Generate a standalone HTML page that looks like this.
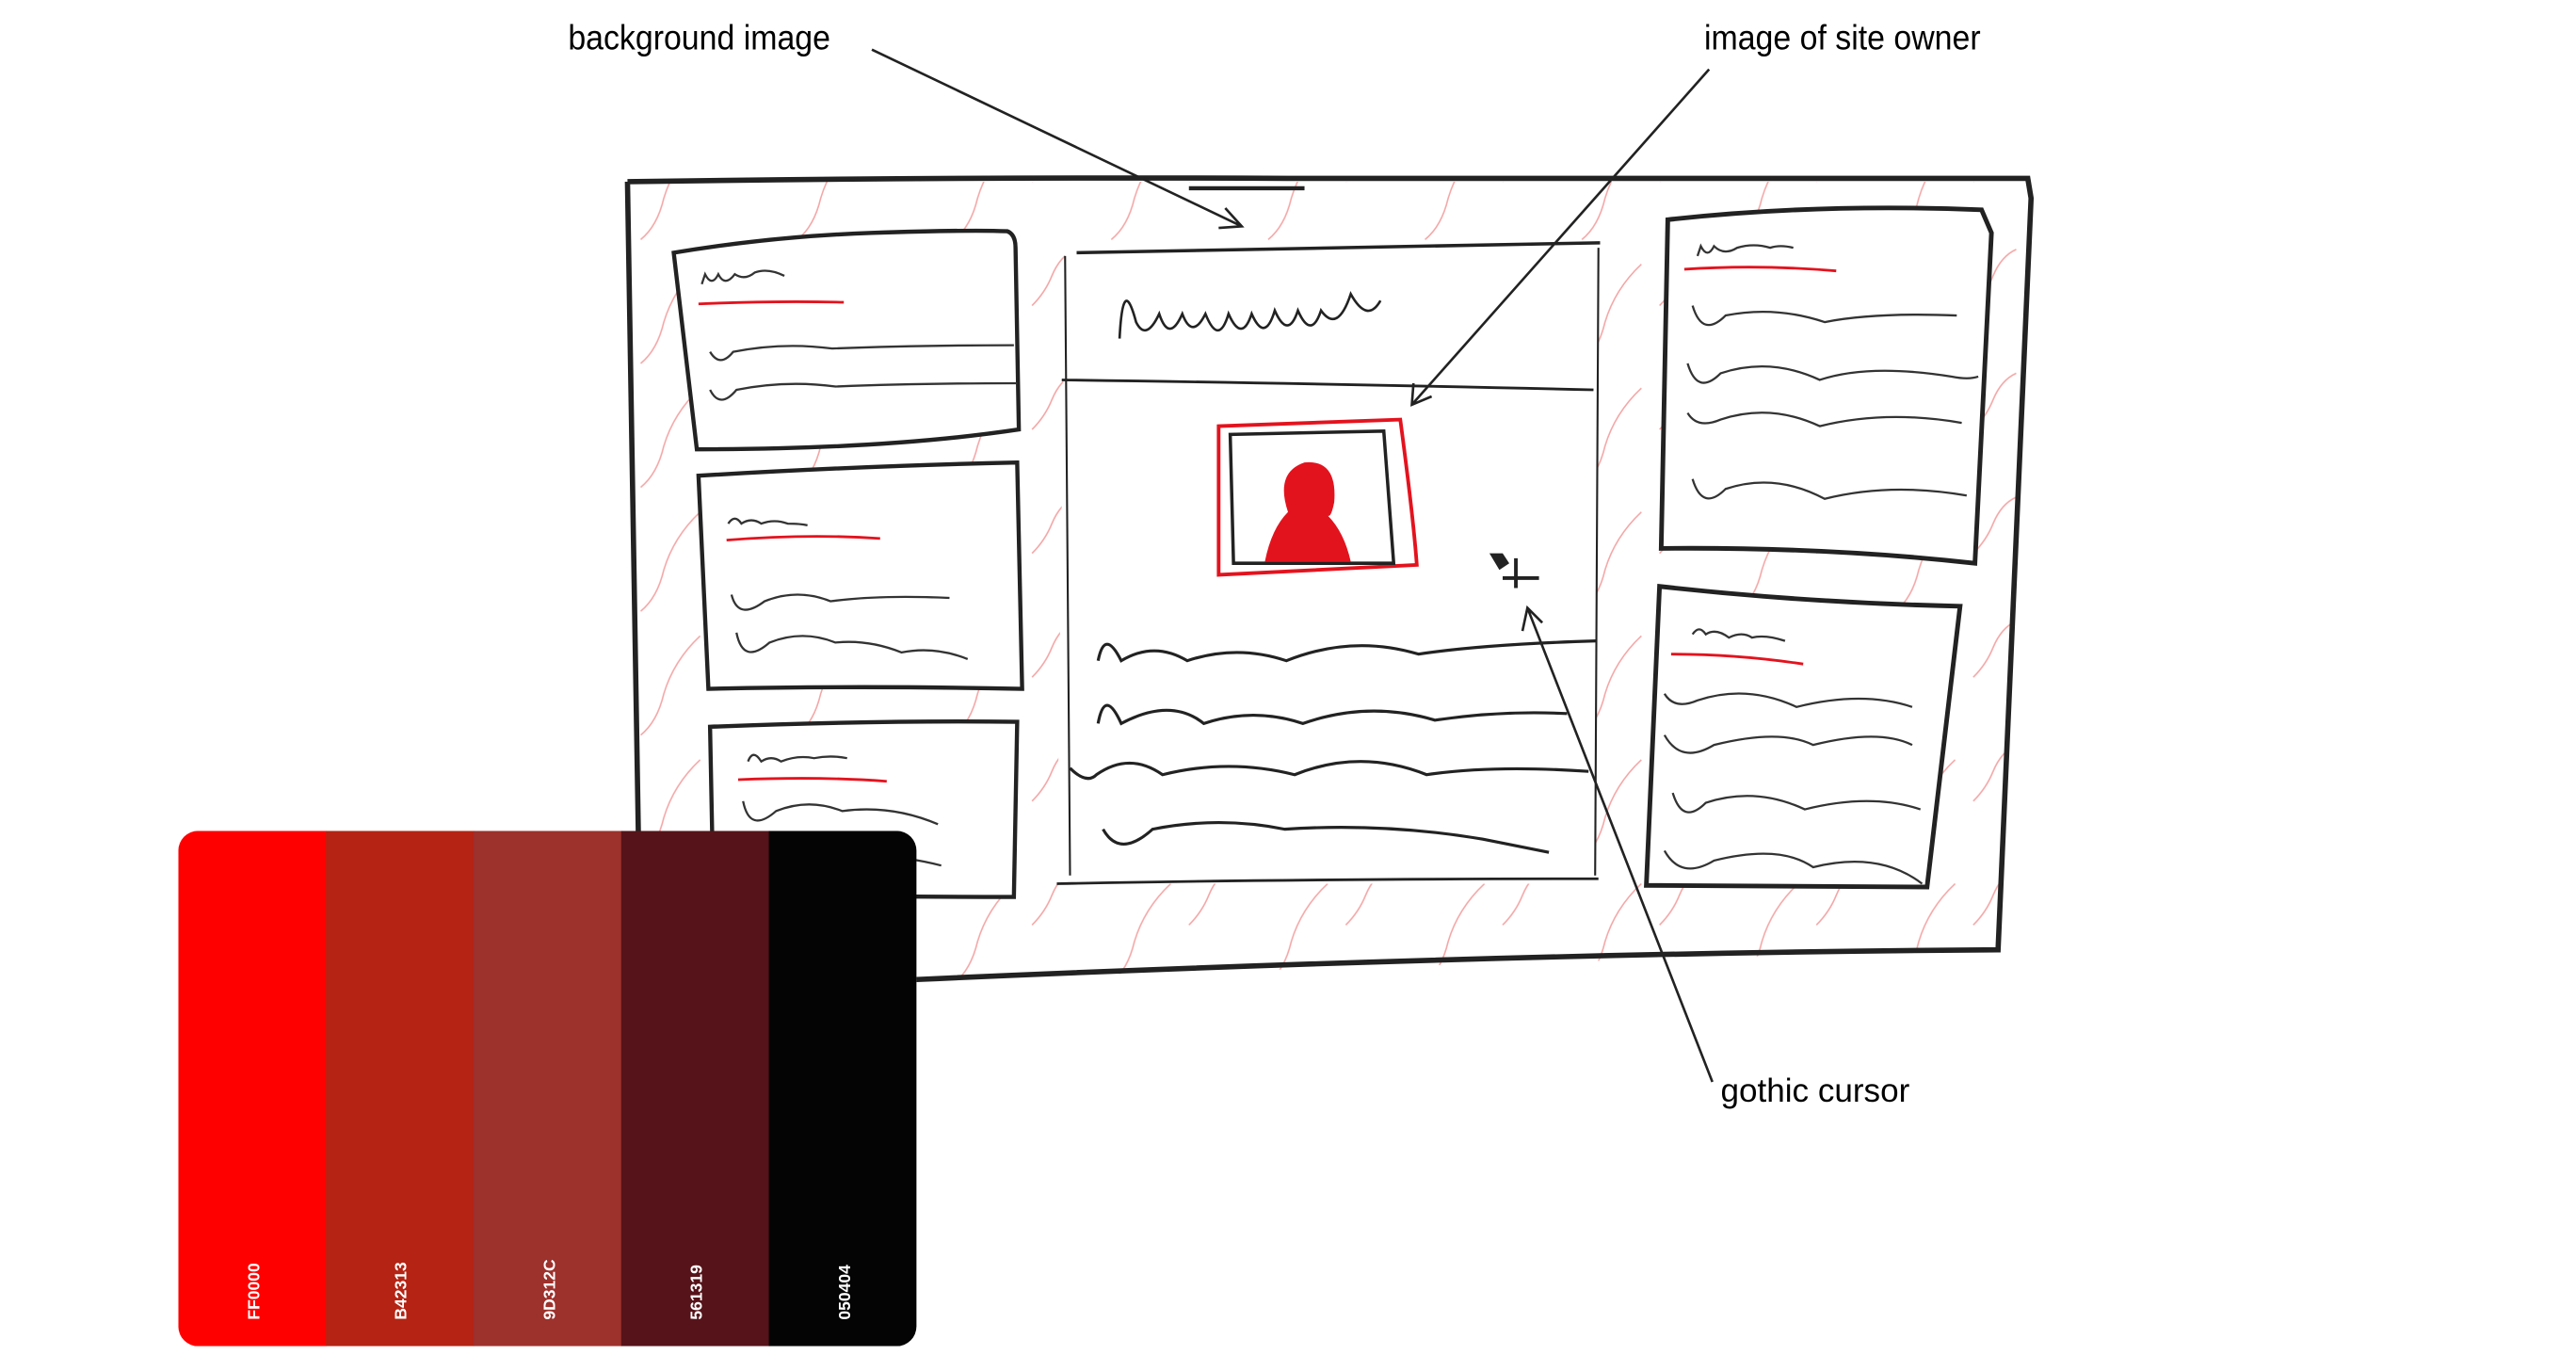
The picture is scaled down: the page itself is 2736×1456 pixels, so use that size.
<!DOCTYPE html>
<html><head><meta charset="utf-8"><style>
html,body{margin:0;padding:0;background:#fff;width:2736px;height:1456px;overflow:hidden}
svg{display:block}
text{font-family:"Liberation Sans",sans-serif}
</style></head><body>
<svg width="2736" height="1456" viewBox="0 0 1560 830" preserveAspectRatio="none" xmlns="http://www.w3.org/2000/svg">
<defs>
<pattern id="h" width="95" height="75" patternUnits="userSpaceOnUse">
<path d="M8 70 q10 -8 14 -25 q6 -20 22 -35" fill="none" stroke="#f4a5a5" stroke-width="0.9"/>
<path d="M55 35 q8 -8 12 -18 q5 -12 14 -16" fill="none" stroke="#f4a5a5" stroke-width="0.9"/>
</pattern>
</defs>
<text x="344" y="30" font-size="21" transform="translate(344 0) scale(0.92 1) translate(-344 0)">background image</text>
<text x="1032" y="30" font-size="21" transform="translate(1032 0) scale(0.92 1) translate(-1032 0)">image of site owner</text>
<text x="1042" y="667" font-size="20">gothic cursor</text>
<path d="M380 110 L1228 110 L1210 575 L555 593 L390 590 Z" fill="url(#h)"/>
<path d="M380 110 q200 -3 400 -2 t448 0 L1230 120 L1210 575 q-300 2 -655 18 M380 110 L388 590" fill="none" stroke="#222" stroke-width="3.2"/>
<path d="M720 114 h70" stroke="#222" stroke-width="2.5"/>
<g fill="#fff" stroke="#222" stroke-width="2.5">
<path d="M408 153 q60 -10 120 -12 q60 -2 82 -1 q5 2 5 10 l2 110 q-80 12 -195 12 z"/>
<path d="M423 288 q100 -6 193 -8 l3 137 q-100 -2 -190 0 z"/>
<path d="M430 440 q100 -4 186 -3 l-2 106 q-90 0 -182 -2 z"/>
</g>
<g fill="none" stroke="#333" stroke-width="1.3">
<path d="M425 172 l2 -6 q4 8 8 0 q4 8 10 0 q6 4 12 -1 q8 -3 18 2"/>
<path d="M430 213 q6 10 14 0 q30 -6 60 -2 q50 -2 110 -2"/>
<path d="M430 236 q6 12 16 0 q30 -6 60 -2 q50 -2 110 -2"/>
<path d="M441 317 q4 -6 8 0 q6 -4 12 0 q8 -3 16 0 q8 0 12 1"/>
<path d="M443 360 q4 16 20 4 q20 -8 40 0 q30 -4 72 -2"/>
<path d="M446 383 q4 20 20 6 q20 -8 40 0 q20 -2 40 6 q20 -4 40 4"/>
<path d="M453 461 q3 -8 8 0 q6 -4 12 0 q10 -4 20 -2 q10 -2 20 0"/>
<path d="M450 485 q4 20 20 6 q20 -8 40 0 q30 -4 58 8"/>
<path d="M450 520 q8 -4 20 0 q20 -2 40 0 q30 -4 60 4"/>
</g>
<g fill="none" stroke="#e3131e" stroke-width="1.6">
<path d="M423 184 q45 -2 88 -1"/><path d="M440 327 q50 -4 93 -1"/><path d="M447 472 q50 -2 90 1"/>
</g>
<path d="M645 150 L968 150 L966 535 L640 535 Z" fill="#fff"/>
<g fill="none" stroke="#222">
<path d="M652 153 q150 -3 317 -6" stroke-width="2"/>
<path d="M645 155 L648 530 M968 150 L966 530" stroke-width="1.2"/>
<path d="M643 230 q150 2 322 6" stroke-width="1.6"/>
<path d="M640 535 q150 -3 328 -3" stroke-width="1.6"/>
<path d="M678 205 q2 -40 10 -10 q6 12 14 -5 q6 18 14 0 q6 16 14 0 q8 20 14 0 q8 18 14 0 q8 18 14 -2 q8 18 14 0 q8 18 14 0 q10 14 18 -10 q10 18 18 4" stroke-width="1.5"/>
<g stroke-width="1.8">
<path d="M665 400 q4 -20 14 0 q20 -12 40 0 q30 -10 60 0 q40 -16 80 -4 q40 -6 108 -8"/>
<path d="M665 438 q4 -22 14 0 q30 -16 50 0 q30 -10 60 0 q40 -14 80 -2 q40 -6 80 -4"/>
<path d="M648 465 q10 10 16 4 q20 -14 40 0 q40 -10 80 0 q40 -16 80 0 q40 -6 98 -2"/>
<path d="M668 502 q10 18 30 0 q40 -8 80 0 q60 -4 120 6 q20 4 40 8"/>
</g>
</g>
<path d="M738 258 l110 -4 q8 60 10 88 l-120 6 z" fill="none" stroke="#e3131e" stroke-width="2.2"/>
<path d="M745 263 l93 -2 q3 40 6 80 l-97 0 z" fill="none" stroke="#222" stroke-width="2"/>
<path d="M766 340 q4 -20 14 -30 q-8 -24 10 -30 q20 -2 18 24 q-2 10 -4 8 q10 10 14 28 z" fill="#e3131e"/>
<path d="M902 335 l8 0 l4 6 l-6 4 z" fill="#222"/>
<path d="M918 338 v18 M910 350 h22" stroke="#222" stroke-width="2.2"/>
<g fill="#fff" stroke="#222" stroke-width="2.8">
<path d="M1010 133 q90 -10 190 -6 l6 14 l-10 200 q-90 -10 -190 -9 z"/>
<path d="M1005 355 q90 10 182 12 l-20 170 l-170 -1 z"/>
</g>
<g fill="none" stroke="#333" stroke-width="1.3">
<path d="M1028 155 l2 -6 q4 8 8 0 q6 6 14 1 q10 -3 20 0 q6 -2 14 0"/>
<path d="M1025 185 q6 20 20 6 q30 -6 60 4 q30 -6 80 -4"/>
<path d="M1022 220 q6 20 20 6 q30 -10 60 4 q30 -10 80 -2 q10 2 16 0"/>
<path d="M1022 250 q6 10 20 4 q30 -10 60 4 q40 -10 86 -2"/>
<path d="M1025 290 q6 20 20 6 q30 -10 60 6 q40 -10 86 -2"/>
<path d="M1025 384 q4 -6 8 0 q6 -4 14 2 q8 -4 14 0 q8 -2 20 2"/>
<path d="M1008 420 q6 10 20 4 q30 -10 60 4 q40 -10 70 0"/>
<path d="M1008 445 q10 18 30 6 q40 -10 60 0 q40 -10 60 0"/>
<path d="M1013 480 q6 20 20 6 q30 -10 60 4 q40 -10 70 0"/>
<path d="M1008 515 q10 18 30 6 q40 -10 60 4 q40 -10 66 10"/>
</g>
<g fill="none" stroke="#e3131e" stroke-width="1.6">
<path d="M1020 163 q45 -3 92 1"/><path d="M1012 396 q40 0 80 6"/>
</g>
<g fill="none" stroke="#222" stroke-width="1.5">
<path d="M528 30 L752 137 M742 126 L752 137 L738 138"/>
<path d="M1035 42 L855 245 M856 232 L855 245 L867 240"/>
<path d="M1037 655 L925 368 M922 382 L925 368 L934 377"/>
</g>
<g>
<clipPath id="c"><rect x="108" y="503" width="447" height="312" rx="12"/></clipPath>
<g clip-path="url(#c)">
<rect x="108" y="503" width="90" height="312" fill="#ff0000"/>
<rect x="197.4" y="503" width="90" height="312" fill="#b42313"/>
<rect x="286.8" y="503" width="90" height="312" fill="#9d312c"/>
<rect x="376.2" y="503" width="90" height="312" fill="#561319"/>
<rect x="465.6" y="503" width="90" height="312" fill="#050404"/>
</g>
<g fill="#fff" font-size="10" font-weight="bold">
<text transform="translate(157 799) rotate(-90)">FF0000</text>
<text transform="translate(246 799) rotate(-90)">B42313</text>
<text transform="translate(336 799) rotate(-90)">9D312C</text>
<text transform="translate(425 799) rotate(-90)">561319</text>
<text transform="translate(515 799) rotate(-90)">050404</text>
</g>
</g>
</svg>
</body></html>
